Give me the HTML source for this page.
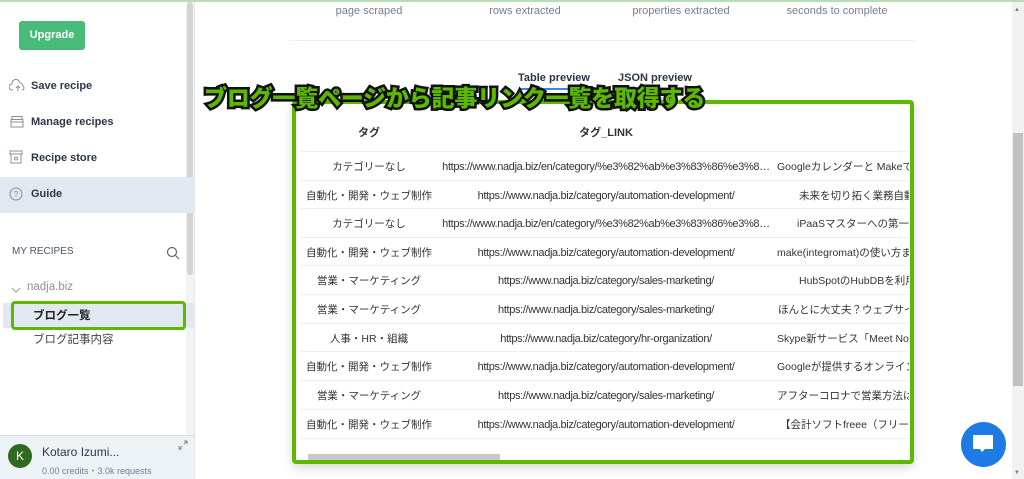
<!DOCTYPE html>
<html><head><meta charset="utf-8"><style>
*{margin:0;padding:0;box-sizing:border-box}
body{width:1024px;height:479px;overflow:hidden;background:#fff;font-family:"Liberation Sans","Noto Sans CJK JP",sans-serif;position:relative;color:#2d3748}
.a{position:absolute;white-space:nowrap}
.mi{position:absolute;left:31px;font-size:11px;font-weight:bold;color:#2d3748}
.st{font-size:11px;color:#718096;transform:translateX(-50%)}
.row{position:absolute;left:300px;width:609px;height:29px;border-top:1px solid #edf0f4;font-size:10.5px;color:#333}
.row span{position:absolute;top:7px;white-space:nowrap}
.row span.c2{top:9px}
.c1{left:0;width:138px;text-align:center}
.c2{left:137px;width:338px;text-align:center;font-size:11px;letter-spacing:-0.35px}
</style></head><body>
<div class="a" style="left:0;top:0;width:1024px;height:2px;background:#b9dcb0"></div>
<div class="a" style="left:186px;top:2px;width:8px;height:477px;background:#f3f3f3"></div>
<div class="a" style="left:187px;top:2px;width:6px;height:273px;background:#d4d4d4;border-radius:3px"></div>
<div class="a" style="left:194px;top:2px;width:1px;height:477px;background:#e2e8f0"></div>
<div class="a" style="left:19px;top:21px;width:66px;height:29px;background:#48bb78;border-radius:3px;color:#fff;font-size:11px;font-weight:bold;text-align:center;line-height:29px">Upgrade</div>
<svg class="a" style="left:9px;top:79px" width="18" height="14" viewBox="0 0 18 14" fill="none" stroke="#8a8f98" stroke-width="1"><path d="M4 11H3a3 3 0 0 1 0-6 4 4 0 0 1 8-1 3 3 0 0 1 3 3 2.5 2.5 0 0 1 0 4h-1"/><path d="M9 12V7M7 9l2-2 2 2"/></svg>
<div class="mi" style="top:80px">Save recipe</div>
<svg class="a" style="left:10px;top:115px" width="14" height="13" viewBox="0 0 14 13" fill="none" stroke="#8a8f98"><rect x="1" y="4.5" width="12" height="7.5"/><path d="M2 4.5V1.5h10v3M1 7h12"/></svg>
<div class="mi" style="top:116px">Manage recipes</div>
<svg class="a" style="left:9px;top:150px" width="14" height="14" viewBox="0 0 14 14" fill="none" stroke="#8a8f98"><path d="M1 1h12v3H1zM2 4v9h10V4"/><circle cx="7" cy="8.5" r="1.5"/></svg>
<div class="mi" style="top:152px">Recipe store</div>
<div class="a" style="left:0;top:177px;width:194px;height:36px;background:#e2e8f0"></div>
<svg class="a" style="left:9px;top:187px" width="14" height="14" viewBox="0 0 14 14" fill="none" stroke="#8a8f98"><circle cx="7" cy="7" r="6"/><text x="7" y="10" font-size="8" text-anchor="middle" fill="#8a8f98" stroke="none" font-family="Liberation Sans">?</text></svg>
<div class="mi" style="top:188px">Guide</div>
<div class="a" style="left:12px;top:246px;font-size:10px;color:#4a5568">MY RECIPES</div>
<svg class="a" style="left:166px;top:246px" width="14" height="14" viewBox="0 0 14 14" fill="none" stroke="#666" stroke-width="1.2"><circle cx="6" cy="6" r="4.5"/><path d="M9.5 9.5l3.5 3.5"/></svg>
<svg class="a" style="left:11px;top:286px" width="10" height="8" viewBox="0 0 10 8" fill="none" stroke="#999"><path d="M1 2l4 4 4-4"/></svg>
<div class="a" style="left:27px;top:281px;font-size:11.5px;color:#8a8f98">nadja.biz</div>
<div class="a" style="left:3px;top:303px;width:191px;height:25px;background:#e2e8f0"></div>
<div class="a" style="left:11px;top:301px;width:175px;height:29px;border:3px solid #5cb800;border-radius:4px"></div>
<div class="a" style="left:33px;top:307px;font-size:11.5px;font-weight:bold;color:#222">ブログ一覧</div>
<div class="a" style="left:33px;top:331px;font-size:11.5px;color:#444">ブログ記事内容</div>
<div class="a" style="left:0;top:435px;width:194px;height:44px;background:#edf2f7;border-top:1px solid #d5dde6"></div>
<div class="a" style="left:8px;top:444px;width:24px;height:24px;border-radius:50%;background:#2f6b1f;color:#fff;font-size:12px;text-align:center;line-height:24px">K</div>
<div class="a" style="left:42px;top:445px;font-size:12px;color:#2d3748">Kotaro Izumi...</div>
<div class="a" style="left:42px;top:464px;font-size:9px;color:#718096">0.00 credits・3.0k requests</div>
<svg class="a" style="left:178px;top:440px" width="10" height="10" viewBox="0 0 10 10" fill="none" stroke="#888"><path d="M6 1h3v3M9 1L6 4M4 9H1V6M1 9l3-3"/></svg>
<div class="a st" style="left:369px;top:5px">page scraped</div>
<div class="a st" style="left:525px;top:5px">rows extracted</div>
<div class="a st" style="left:681px;top:5px">properties extracted</div>
<div class="a st" style="left:837px;top:5px">seconds to complete</div>
<div class="a" style="left:290px;top:40px;width:625px;height:1px;background:#edf0f4"></div>
<div class="a" style="left:518px;top:72px;font-size:11px;font-weight:bold;color:#2d3748">Table preview</div>
<div class="a" style="left:618px;top:72px;font-size:11px;font-weight:bold;color:#2d3748">JSON preview</div>
<div class="a" style="left:520px;top:88px;width:70px;height:2px;background:#3b82f6"></div>
<div class="a" style="left:292px;top:100px;width:622px;height:364px;border:4px solid #5cb800;border-radius:4px;box-shadow:0 4px 10px rgba(0,0,0,.15);background:#fff;overflow:hidden"></div>
<div class="a" style="left:296px;top:104px;width:613px;height:356px;overflow:hidden">
<div class="a" style="left:4px;top:20px;width:138px;text-align:center;font-size:11px;font-weight:bold;color:#333">タグ</div>
<div class="a" style="left:141px;top:20px;width:338px;text-align:center;font-size:11px;font-weight:bold;color:#333">タグ_LINK</div>
<div class="a" style="left:12px;top:350px;width:192px;height:6px;background:#c8c8c8"></div>
</div>
<div style="position:absolute;left:0;top:0;width:909px;height:479px;overflow:hidden">
<div class="row" style="top:151px"><span class="c1">カテゴリーなし</span><span class="c2">https://www.nadja.biz/en/category/%e3%82%ab%e3%83%86%e3%8…</span><span style="left:477px">Googleカレンダーと Makeで</span></div>
<div class="row" style="top:180px"><span class="c1">自動化・開発・ウェブ制作</span><span class="c2">https://www.nadja.biz/category/automation-development/</span><span style="left:499px">未来を切り拓く業務自動化</span></div>
<div class="row" style="top:208px"><span class="c1">カテゴリーなし</span><span class="c2">https://www.nadja.biz/en/category/%e3%82%ab%e3%83%86%e3%8…</span><span style="left:497px">iPaaSマスターへの第一歩</span></div>
<div class="row" style="top:237px"><span class="c1">自動化・開発・ウェブ制作</span><span class="c2">https://www.nadja.biz/category/automation-development/</span><span style="left:477px">make(integromat)の使い方まとめ</span></div>
<div class="row" style="top:265px"><span class="c1">営業・マーケティング</span><span class="c2">https://www.nadja.biz/category/sales-marketing/</span><span style="left:499px">HubSpotのHubDBを利用</span></div>
<div class="row" style="top:294px"><span class="c1">営業・マーケティング</span><span class="c2">https://www.nadja.biz/category/sales-marketing/</span><span style="left:478px">ほんとに大丈夫？ウェブサイト</span></div>
<div class="row" style="top:323px"><span class="c1">人事・HR・組織</span><span class="c2">https://www.nadja.biz/category/hr-organization/</span><span style="left:477px">Skype新サービス「Meet Now」</span></div>
<div class="row" style="top:351px"><span class="c1">自動化・開発・ウェブ制作</span><span class="c2">https://www.nadja.biz/category/automation-development/</span><span style="left:477px">Googleが提供するオンライン</span></div>
<div class="row" style="top:380px"><span class="c1">営業・マーケティング</span><span class="c2">https://www.nadja.biz/category/sales-marketing/</span><span style="left:477px">アフターコロナで営業方法は</span></div>
<div class="row" style="top:409px"><span class="c1">自動化・開発・ウェブ制作</span><span class="c2">https://www.nadja.biz/category/automation-development/</span><span style="left:480px">【会計ソフトfreee（フリー）】</span></div>
<div class="row" style="top:438px"></div>
</div>
<div class="a" style="left:204px;top:79px;font-size:23px;font-weight:900;color:#5cb800;-webkit-text-stroke:5px #111;paint-order:stroke fill;letter-spacing:-0.2px;font-family:'Noto Sans CJK JP',sans-serif">ブログ一覧ページから記事リンク一覧を取得する</div>
<div class="a" style="left:1012px;top:2px;width:12px;height:477px;background:#f1f1f1"></div>
<div class="a" style="left:1013px;top:133px;width:10px;height:253px;background:#c1c1c1"></div>
<div class="a" style="left:1014px;top:7px;font-size:6px;color:#777">▲</div>
<div class="a" style="left:1014px;top:470px;font-size:6px;color:#777">▼</div>
<div class="a" style="left:961px;top:422px;width:45px;height:45px;border-radius:50%;background:#1e7be6"></div>
<svg class="a" style="left:971px;top:433px" width="24" height="22" viewBox="0 0 24 22"><path d="M2 2h20v14H14l-3 3-2-3H2z" fill="#fff"/></svg>
</body></html>
